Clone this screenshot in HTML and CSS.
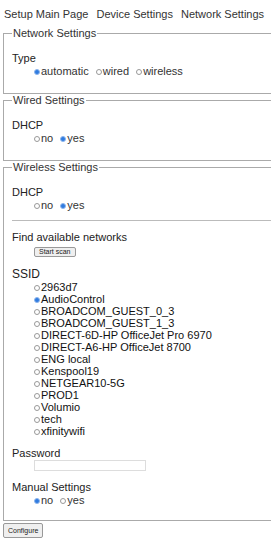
FILE: index.html
```html
<!DOCTYPE html>
<html lang="en">
<head>
  <meta charset="UTF-8">
  <meta name="viewport" content="width=device-width, initial-scale=1.0">
  <title>Network Settings</title>
  <link rel="stylesheet" href="styles.css">
</head>
<body>
  <nav class="topnav">
    <a href="#">Setup Main Page</a>
    <a href="#">Device Settings</a>
    <a href="#">Network Settings</a>
  </nav>

  <form id="networkForm">
    <!-- Network type -->
    <fieldset class="group">
      <legend>Network Settings</legend>
      <div class="field">
        <div class="field-label">Type</div>
        <div class="options">
          <label><input type="radio" name="type" value="automatic" checked>automatic</label>
          <label><input type="radio" name="type" value="wired">wired</label>
          <label><input type="radio" name="type" value="wireless">wireless</label>
        </div>
      </div>
    </fieldset>

    <!-- Wired -->
    <fieldset class="group">
      <legend>Wired Settings</legend>
      <div class="field">
        <div class="field-label">DHCP</div>
        <div class="options">
          <label><input type="radio" name="wired_dhcp" value="no">no</label>
          <label><input type="radio" name="wired_dhcp" value="yes" checked>yes</label>
        </div>
      </div>
    </fieldset>

    <!-- Wireless -->
    <fieldset class="group wireless">
      <legend>Wireless Settings</legend>
      <div class="field">
        <div class="field-label">DHCP</div>
        <div class="options">
          <label><input type="radio" name="wifi_dhcp" value="no">no</label>
          <label><input type="radio" name="wifi_dhcp" value="yes" checked>yes</label>
        </div>
      </div>

      <hr>

      <div class="field scan">
        <div class="field-label">Find available networks</div>
        <div class="options">
          <button type="button" class="small-btn scan-btn">Start scan</button>
        </div>
      </div>

      <div class="field ssid">
        <div class="field-label ssid-label">SSID</div>
        <div class="options ssid-list">
          <label><input type="radio" name="ssid" value="2963d7">2963d7</label>
          <label><input type="radio" name="ssid" value="AudioControl" checked>AudioControl</label>
          <label><input type="radio" name="ssid" value="BROADCOM_GUEST_0_3">BROADCOM_GUEST_0_3</label>
          <label><input type="radio" name="ssid" value="BROADCOM_GUEST_1_3">BROADCOM_GUEST_1_3</label>
          <label><input type="radio" name="ssid" value="DIRECT-6D">DIRECT-6D-HP OfficeJet Pro 6970</label>
          <label><input type="radio" name="ssid" value="DIRECT-A6">DIRECT-A6-HP OfficeJet 8700</label>
          <label><input type="radio" name="ssid" value="ENG local">ENG local</label>
          <label><input type="radio" name="ssid" value="Kenspool19">Kenspool19</label>
          <label><input type="radio" name="ssid" value="NETGEAR10-5G">NETGEAR10-5G</label>
          <label><input type="radio" name="ssid" value="PROD1">PROD1</label>
          <label><input type="radio" name="ssid" value="Volumio">Volumio</label>
          <label><input type="radio" name="ssid" value="tech">tech</label>
          <label><input type="radio" name="ssid" value="xfinitywifi">xfinitywifi</label>
        </div>
      </div>

      <div class="field password">
        <div class="field-label">Password</div>
        <div class="options">
          <input type="password" class="text-input" name="password">
        </div>
      </div>

      <div class="field manual">
        <div class="field-label">Manual Settings</div>
        <div class="options">
          <label><input type="radio" name="manual" value="no" checked>no</label>
          <label><input type="radio" name="manual" value="yes">yes</label>
        </div>
      </div>
    </fieldset>

    <button type="button" class="small-btn configure">Configure</button>
  </form>
</body>
</html>
```

FILE: styles.css
```css
html {
  overflow: hidden;
}
body {
  margin: 3px;
  font-family: "Liberation Sans", Arial, sans-serif;
  font-size: 11px;
  line-height: 13px;
  color: #333;
  background: #fff;
}
.topnav {
  padding: 5px 0 0 1px;
  margin-bottom: 6px;
  white-space: nowrap;
}
.topnav a {
  color: #333;
  text-decoration: none;
  margin-right: 5px;
}
.group {
  width: 300px;
  margin: 0;
  padding: 0 8px 15px;
  border: 1px solid #aaa;
}
.group legend {
  padding: 0 1px;
  color: #333;
}
.wireless {
  padding-bottom: 13px;
}
.field {
  margin-top: 12px;
}
.options {
  padding-left: 22px;
}
.options label {
  margin-right: 4px;
}
.field-label {
  color: #222;
}
.ssid {
  margin-top: 11px;
}
.ssid-label {
  font-size: 12px;
}
.ssid-list {
  line-height: 12px;
}
.ssid-list label {
  display: block;
  color: #111;
}
.password,
.manual {
  margin-top: 10px;
}
input[type="radio"] {
  appearance: none;
  -webkit-appearance: none;
  width: 6px;
  height: 6px;
  margin: 0 1px 1px 0;
  border: 1px solid #999;
  border-radius: 50%;
  vertical-align: middle;
  background: #fff;
}
input[type="radio"]:checked {
  background: #2f7be0;
  border-color: #8fb6ec;
}
hr {
  margin: 8px 0 0;
  border: none;
  border-top: 1px solid #bbb;
}
.scan {
  margin-top: 10px;
}
.small-btn {
  font-family: "Liberation Sans", Arial, sans-serif;
  font-size: 7px;
  color: #222;
  border: 1px solid #999;
  border-radius: 2px;
  background: #efefef;
}
.scan-btn {
  margin-top: 2px;
  padding: 0 4px;
  line-height: 8px;
}
.text-input {
  display: block;
  box-sizing: border-box;
  width: 112px;
  height: 11px;
  margin: 0;
  padding: 0;
  border: 1px solid #ddd;
}
.configure {
  display: block;
  margin-top: 2px;
  padding: 2px 4px;
  line-height: 9px;
}
```
